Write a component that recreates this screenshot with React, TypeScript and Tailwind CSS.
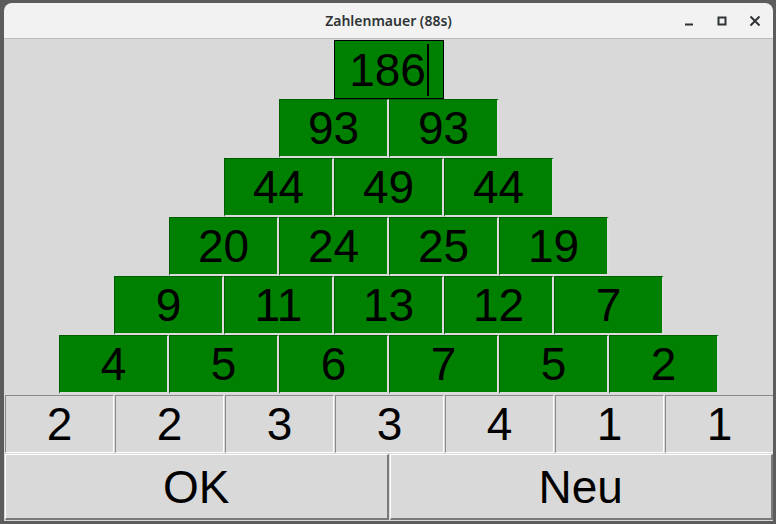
import React from 'react';

const rows: number[][] = [
  [186],
  [93, 93],
  [44, 49, 44],
  [20, 24, 25, 19],
  [9, 11, 13, 12, 7],
  [4, 5, 6, 7, 5, 2],
];

const base = [2, 2, 3, 3, 4, 1, 1];

const font = { fontFamily: '"Liberation Sans", Arial, sans-serif' };

export default function App() {
  return (
    <div className="w-[776px] h-[524px] bg-[#5c5c5c] pt-[3px] pl-[4px] overflow-hidden">
      <div className="w-[769px] h-[518px] flex flex-col overflow-hidden">
        {/* Title bar */}
        <div className="relative h-[36px] shrink-0 rounded-t-[8px] bg-[#f2f2f2] border-b border-[#bcbcbc] flex items-center justify-center">
          <span
            className="text-[14px] font-semibold text-[#2e3436]"
            style={{ fontFamily: '"Noto Sans", "DejaVu Sans", sans-serif' }}
          >
            Zahlenmauer (88s)
          </span>
          <div className="absolute right-[12px] top-0 h-full flex items-center gap-[21px] text-[#2e3436]">
            <svg width="12" height="12" viewBox="0 0 12 12">
              <rect x="2" y="8.5" width="8" height="2" fill="currentColor" />
            </svg>
            <svg width="12" height="12" viewBox="0 0 12 12">
              <rect x="2.5" y="2.5" width="7" height="7" fill="none" stroke="currentColor" strokeWidth="2" />
            </svg>
            <svg width="12" height="12" viewBox="0 0 12 12">
              <path d="M1.5 1.5 L10.5 10.5 M10.5 1.5 L1.5 10.5" stroke="currentColor" strokeWidth="2" />
            </svg>
          </div>
        </div>

        {/* Content */}
        <div className="flex-1 bg-[#d9d9d9] pt-[1px]" style={font}>
          <div className="w-[770px]">
            {rows.map((row, i) => (
              <div key={i} className="flex justify-center">
                {row.map((v, j) =>
                  i === 0 ? (
                    <div
                      key={j}
                      className="w-[110px] h-[59px] border border-black bg-[#008000] flex items-center justify-center text-[46px] text-black leading-none"
                    >
                      <span>{v}</span>
                      <span className="w-[2px] h-[52px] bg-black ml-[1px]" />
                    </div>
                  ) : (
                    <div
                      key={j}
                      className="w-[110px] h-[59px] border-t border-l border-r-2 border-b-2 border-t-[#005c00] border-l-[#005c00] border-r-[#dcdcdc] border-b-[#dcdcdc] bg-[#008000] flex items-center justify-center text-[46px] text-black leading-none"
                    >
                      {v}
                    </div>
                  )
                )}
              </div>
            ))}

            {/* Base row */}
            <div className="flex">
              {base.map((v, i) => (
                <div key={i} className="w-[110px] h-[59px] pl-[1px] pt-[1px] shrink-0">
                  <div className="h-full border-t border-l border-r border-b border-t-[#8a8a8a] border-l-[#8a8a8a] border-r-white border-b-white flex items-center justify-center text-[46px] text-black leading-none">
                    {v}
                  </div>
                </div>
              ))}
            </div>
          </div>

          {/* Buttons */}
          <div className="grid grid-cols-2 h-[67px]">
            {['OK', 'Neu'].map(label => (
              <div key={label} className="pl-[1px] pt-[1px] h-full">
                <button className="w-full h-full border-t border-l border-r-2 border-b-2 border-t-white border-l-white border-r-[#7a7a7a] border-b-[#7a7a7a] bg-[#d9d9d9] text-[46px] text-black leading-none flex items-center justify-center">
                  {label}
                </button>
              </div>
            ))}
          </div>
        </div>
      </div>
    </div>
  );
}
